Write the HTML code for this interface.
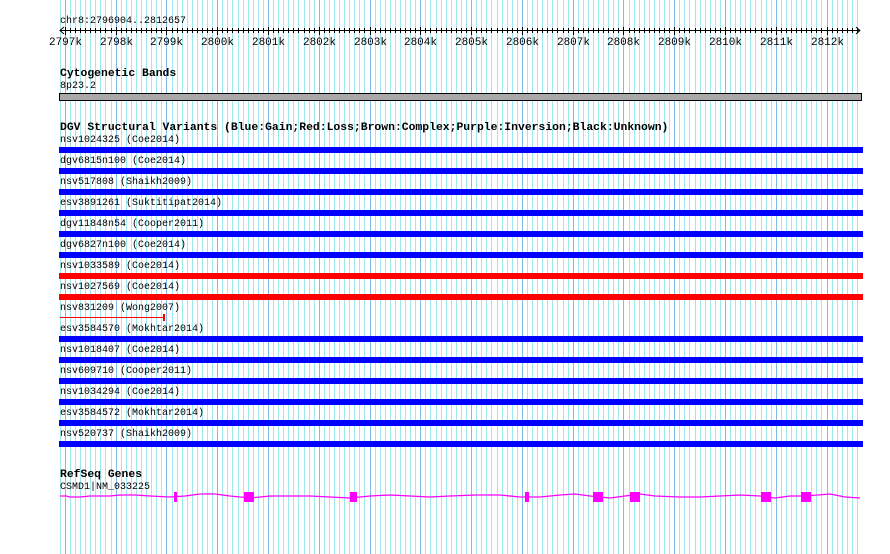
<!DOCTYPE html>
<html><head><meta charset="utf-8"><style>
body{margin:0;background:#fff;width:890px;height:554px;overflow:hidden;position:relative;font-family:"Liberation Mono",monospace;font-size:10px;color:#000}
svg{position:absolute;left:0;top:0}
.t{position:absolute;white-space:pre;line-height:11px}
.b{font-weight:bold;font-size:11.4px}
</style></head><body>
<svg id="g" width="890" height="554"></svg>
<div class="t" style="left:60px;top:16px">chr8:2796904..2812657</div>
<div class="t b" style="left:60px;top:69px">Cytogenetic Bands</div>
<div class="t" style="left:60px;top:81px">8p23.2</div>
<div class="t b" style="left:60px;top:123px">DGV Structural Variants (Blue:Gain;Red:Loss;Brown:Complex;Purple:Inversion;Black:Unknown)</div>
<div class="t" style="left:60px;top:135px">nsv1024325 (Coe2014)</div>
<div class="t" style="left:60px;top:156px">dgv6815n100 (Coe2014)</div>
<div class="t" style="left:60px;top:177px">nsv517808 (Shaikh2009)</div>
<div class="t" style="left:60px;top:198px">esv3891261 (Suktitipat2014)</div>
<div class="t" style="left:60px;top:219px">dgv11848n54 (Cooper2011)</div>
<div class="t" style="left:60px;top:240px">dgv6827n100 (Coe2014)</div>
<div class="t" style="left:60px;top:261px">nsv1033589 (Coe2014)</div>
<div class="t" style="left:60px;top:282px">nsv1027569 (Coe2014)</div>
<div class="t" style="left:60px;top:303px">nsv831209 (Wong2007)</div>
<div class="t" style="left:60px;top:324px">esv3584570 (Mokhtar2014)</div>
<div class="t" style="left:60px;top:345px">nsv1018407 (Coe2014)</div>
<div class="t" style="left:60px;top:366px">nsv609710 (Cooper2011)</div>
<div class="t" style="left:60px;top:387px">nsv1034294 (Coe2014)</div>
<div class="t" style="left:60px;top:408px">esv3584572 (Mokhtar2014)</div>
<div class="t" style="left:60px;top:429px">nsv520737 (Shaikh2009)</div>
<div class="t b" style="left:60px;top:470px">RefSeq Genes</div>
<div class="t" style="left:60px;top:482px">CSMD1|NM_033225</div>
<script>
var s=document.getElementById('g'),h='';
function X(kb){return 60+(kb-2796.904)*50.78;}
for(var i=27970;i<=28126;i++){var kb=i/10,x=Math.round(X(kb))+0.5;var maj=i%10==0;
 h+='<line x1="'+x+'" y1="0" x2="'+x+'" y2="554" stroke="'+(maj?'#80bcea':'#a0e8f0')+'" stroke-width="1"/>';
}
h+='<line x1="60.5" y1="0" x2="60.5" y2="554" stroke="#a0e8f0"/>';
h+='<line x1="60" y1="30.5" x2="860" y2="30.5" stroke="#000"/>';
h+='<polyline points="64,27 60,30.5 64,34" fill="none" stroke="#000"/><polyline points="856,27 860,30.5 856,34" fill="none" stroke="#000"/>';
for(var i=27970;i<=28126;i++){var x=Math.round(X(i/10))+0.5;var maj=i%10==0;
 h+='<line x1="'+x+'" y1="'+(maj?27:28)+'" x2="'+x+'" y2="'+(maj?35:33)+'" stroke="#000"/>';
 if(maj) h+='<text x="'+x+'" y="45" font-family="Liberation Mono,monospace" font-size="11" text-anchor="middle">'+(i/10)+'k</text>';
}
h+='<rect x="59.5" y="93.5" width="802" height="7" fill="#aaa8a8" stroke="#000"/>';
var c=['#0000ff','#0000ff','#0000ff','#0000ff','#0000ff','#0000ff','#ff0000','#ff0000',null,'#0000ff','#0000ff','#0000ff','#0000ff','#0000ff','#0000ff'];
for(var k=0;k<15;k++){var y=147+21*k;if(c[k])h+='<rect x="59" y="'+y+'" width="804" height="6" fill="'+c[k]+'"/>';}
h+='<line x1="60" y1="317.5" x2="163" y2="317.5" stroke="#ff0000"/><rect x="163" y="314" width="2" height="7" fill="#ff0000"/>';
var pts='60,496 66,496 70,497 80,497 90,496 110,496 120,495 135,495 150,496 170,497 185,496 200,494 215,494 230,496 250,498 270,496 290,496 310,496 330,497 350,498 370,496 390,495 410,496 430,497 450,496 475,495 500,495 520,497 540,497 560,495 575,494 590,496 610,498 625,496 640,494 655,496 680,497 700,497 720,496 740,495 760,496 775,498 790,496 805,496 830,494 845,497 860,498';
h+='<polyline points="'+pts+'" fill="none" stroke="#ff00ff" stroke-width="1.3"/>';
var ex=[[174,3],[244,10],[350,7],[525,4],[593,10],[630,10],[761,10],[801,10]];
ex.forEach(function(e){h+='<rect x="'+e[0]+'" y="492" width="'+e[1]+'" height="10" fill="#ff00ff"/>';});
s.innerHTML=h;
</script>
</body></html>
